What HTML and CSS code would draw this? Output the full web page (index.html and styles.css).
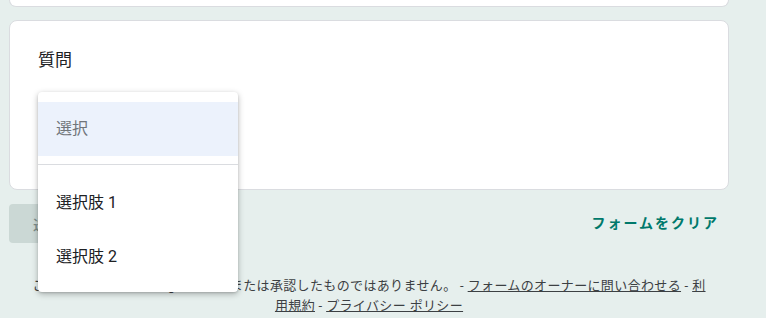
FILE: index.html
```html
<!DOCTYPE html>
<html lang="ja">
<head>
<meta charset="utf-8">
<link rel="stylesheet" href="styles.css">
</head>
<body>
<div class="page">
  <div class="card card-top"></div>
  <div class="card question">
    <div class="q-title">質問</div>
    <div class="select-slot"></div>
  </div>
  <div class="actions">
    <button class="submit">送信</button>
    <button class="clear">フォームをクリア</button>
  </div>
  <div class="footer">このコンテンツは Google が作成または承認したものではありません。 - <a href="#">フォームのオーナーに問い合わせる</a> - <a href="#">利用規約</a> - <a href="#">プライバシー ポリシー</a></div>
  <div class="popup">
    <div class="opt placeholder">選択</div>
    <div class="divider"></div>
    <div class="opt">選択肢 1</div>
    <div class="opt">選択肢 2</div>
  </div>
</div>
</body>
</html>
```
FILE: styles.css
```css
html, body {
  margin: 0;
  padding: 0;
  background: #e6efed;
  font-family: Roboto, "Noto Sans CJK JP", sans-serif;
  color: #202124;
}
.page {
  position: relative;
  width: 720px;
  margin-left: 9px;
  display: flex;
  flex-direction: column;
}
.card {
  background: #fff;
  border: 1px solid #dadce0;
  border-radius: 8px;
  box-sizing: border-box;
}
.card-top {
  height: 7px;
  border-top: none;
  border-radius: 0 0 8px 8px;
}
.question {
  margin-top: 13px;
  height: 170px;
  padding: 27px 28px 24px;
}
.q-title {
  font-size: 17px;
  line-height: 24px;
  letter-spacing: 0.1px;
}
.actions {
  margin-top: 14px;
  display: flex;
  justify-content: space-between;
  align-items: center;
  height: 39px;
}
.submit {
  height: 39px;
  padding: 0 24px;
  border: none;
  border-radius: 4px;
  background: #cbd8d5;
  color: #7c8b88;
  font-family: inherit;
  font-size: 14px;
  font-weight: 500;
}
.clear {
  border: none;
  background: none;
  padding: 0 10px 3px 0;
  color: #00796b;
  font-family: inherit;
  font-size: 14px;
  font-weight: 700;
  letter-spacing: 2px;
}
.footer {
  margin: 33px auto 0;
  width: 680px;
  text-align: center;
  font-size: 13px;
  line-height: 20px;
  color: #3c4043;
  letter-spacing: 0.36px;
}
.footer a {
  color: #3c4043;
}
.popup {
  position: absolute;
  left: 29px;
  top: 92px;
  width: 200px;
  background: #fff;
  border-radius: 4px;
  box-shadow: 0 2px 6px rgba(0,0,0,0.28), 0 1px 2px rgba(0,0,0,0.12);
  padding: 10px 0 8px;
}
.opt {
  height: 54px;
  line-height: 54px;
  padding-left: 18px;
  font-size: 16px;
  color: #202124;
}
.opt.placeholder {
  background: #ecf2fc;
  color: #70757a;
}
.divider {
  height: 1px;
  background: #dadce0;
  margin: 8px 0 11px;
}
```
